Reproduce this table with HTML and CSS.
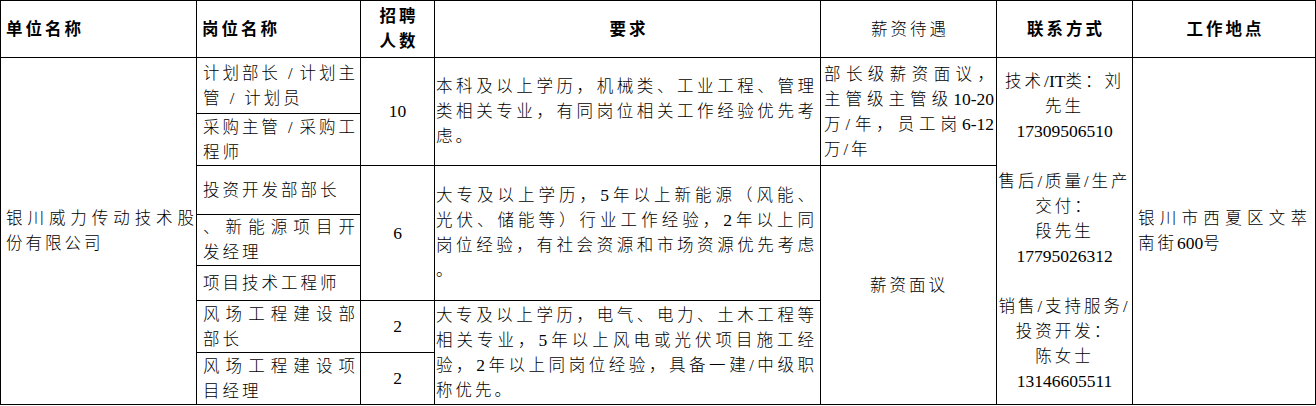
FILE: index.html
```html
<!DOCTYPE html>
<html lang="zh-CN">
<head>
<meta charset="utf-8">
<title>招聘信息</title>
<link rel="stylesheet" href="styles.css">
</head>
<body>
<table class="jobs">
  <colgroup>
    <col class="c-unit"><col class="c-post"><col class="c-num"><col class="c-req"><col class="c-pay"><col class="c-contact"><col class="c-loc">
  </colgroup>
  <thead>
    <tr class="h-head">
      <th class="left unit">单位名称</th>
      <th class="left post">岗位名称</th>
      <th class="num"><span class="ln">招聘</span><span class="ln">人数</span></th>
      <th>要求</th>
      <th class="plain">薪资待遇</th>
      <th>联系方式</th>
      <th>工作地点</th>
    </tr>
  </thead>
  <tbody>
    <tr class="h-r1">
      <td rowspan="7" class="unit"><span class="ln j">银川威力传动技术股</span><span class="ln">份有限公司</span></td>
      <td class="post"><span class="ln j">计划部长 / 计划主</span><span class="ln">管 / 计划员</span></td>
      <td rowspan="2" class="num"><span class="n">10</span></td>
      <td rowspan="2" class="req"><span class="ln j">本科及以上学历，机械类、工业工程、管理</span><span class="ln j">类相关专业，有同岗位相关工作经验优先考</span><span class="ln">虑。</span></td>
      <td rowspan="2" class="pay"><span class="ln j">部长级薪资面议，</span><span class="ln j">主管级主管级<span class="n">10-20</span></span><span class="ln j">万/年，员工岗<span class="n">6-12</span></span><span class="ln">万/年</span></td>
      <td rowspan="7" class="contact"><span class="ln">技术<span class="n">/IT</span>类：刘</span><span class="ln">先生</span><span class="ln"><span class="n">17309506510</span></span><span class="ln blank">&nbsp;</span><span class="ln">售后/质量/生产</span><span class="ln">交付：</span><span class="ln">段先生</span><span class="ln"><span class="n">17795026312</span></span><span class="ln blank">&nbsp;</span><span class="ln">销售/支持服务/</span><span class="ln">投资开发：</span><span class="ln">陈女士</span><span class="ln"><span class="n">13146605511</span></span></td>
      <td rowspan="7" class="loc"><span class="ln j">银川市西夏区文萃</span><span class="ln">南街<span class="n">600</span>号</span></td>
    </tr>
    <tr class="h-r2">
      <td class="post"><span class="ln j">采购主管 / 采购工</span><span class="ln">程师</span></td>
    </tr>
    <tr class="h-r3">
      <td class="post"><span class="ln">投资开发部部长</span></td>
      <td rowspan="3" class="num"><span class="n">6</span></td>
      <td rowspan="3" class="req"><span class="ln j">大专及以上学历，<span class="n">5</span>年以上新能源（风能、</span><span class="ln j">光伏、储能等）行业工作经验，<span class="n">2</span>年以上同</span><span class="ln j">岗位经验，有社会资源和市场资源优先考虑</span><span class="ln">。</span></td>
      <td rowspan="5" class="pay center">薪资面议</td>
    </tr>
    <tr class="h-r4">
      <td class="post"><span class="ln j">、新能源项目开</span><span class="ln">发经理</span></td>
    </tr>
    <tr class="h-r5">
      <td class="post"><span class="ln">项目技术工程师</span></td>
    </tr>
    <tr class="h-r6">
      <td class="post"><span class="ln j">风场工程建设部</span><span class="ln">部长</span></td>
      <td class="num"><span class="n">2</span></td>
      <td rowspan="2" class="req"><span class="ln j">大专及以上学历，电气、电力、土木工程等</span><span class="ln j">相关专业，<span class="n">5</span>年以上风电或光伏项目施工经</span><span class="ln j">验，<span class="n">2</span>年以上同岗位经验，具备一建/中级职</span><span class="ln">称优先。</span></td>
    </tr>
    <tr class="h-r7">
      <td class="post"><span class="ln j">风场工程建设项</span><span class="ln">目经理</span></td>
      <td class="num"><span class="n">2</span></td>
    </tr>
  </tbody>
</table>
</body>
</html>
```

FILE: styles.css
```css
html, body {
  margin: 0;
  padding: 0;
  background: #ffffff;
}

body {
  font-family: "Liberation Serif", "Noto Sans CJK SC", serif;
  color: #000000;
}

.jobs {
  border-collapse: collapse;
  table-layout: fixed;
  width: 1315px;
  font-size: 16.5px;
  line-height: 25px;
  letter-spacing: 3px;
  font-weight: 300;
}

.c-unit { width: 196px; }
.c-post { width: 164px; }
.c-num { width: 74px; }
.c-req { width: 386px; }
.c-pay { width: 176px; }
.c-contact { width: 136px; }
.c-loc { width: 183px; }

.jobs th,
.jobs td {
  border: 1px solid #000000;
  padding: 0 2px 0 5px;
  vertical-align: middle;
  text-align: left;
  overflow: hidden;
}

.jobs th {
  font-weight: 700;
  text-align: center;
}

.jobs th.left { text-align: left; }
.jobs th.plain { font-weight: 300; }

.h-head { height: 57px; }
.h-r1 { height: 56px; }
.h-r2 { height: 52px; }
.h-r3 { height: 49px; }
.h-r4 { height: 50px; }
.h-r5 { height: 35px; }
.h-r6 { height: 52px; }
.h-r7 { height: 52px; }

.ln {
  display: block;
  white-space: nowrap;
}

.j {
  text-align: justify;
  text-align-last: justify;
  letter-spacing: 0;
}

.n {
  font-size: 17.5px;
  letter-spacing: 0;
}

.jobs td.unit { padding: 0 2px 0 5px; }
.jobs td.post { padding: 0 5px 0 6px; }
.jobs td.num { text-align: center; padding: 0 2px; }
.jobs td.req { padding: 0 6px 0 1px; }
.jobs td.pay { padding: 0 2px 0 3px; }
.jobs td.pay.center { text-align: center; }
.jobs td.contact { text-align: center; padding: 0 1px; }
.jobs td.loc { padding: 0 8px 0 5px; }
```
